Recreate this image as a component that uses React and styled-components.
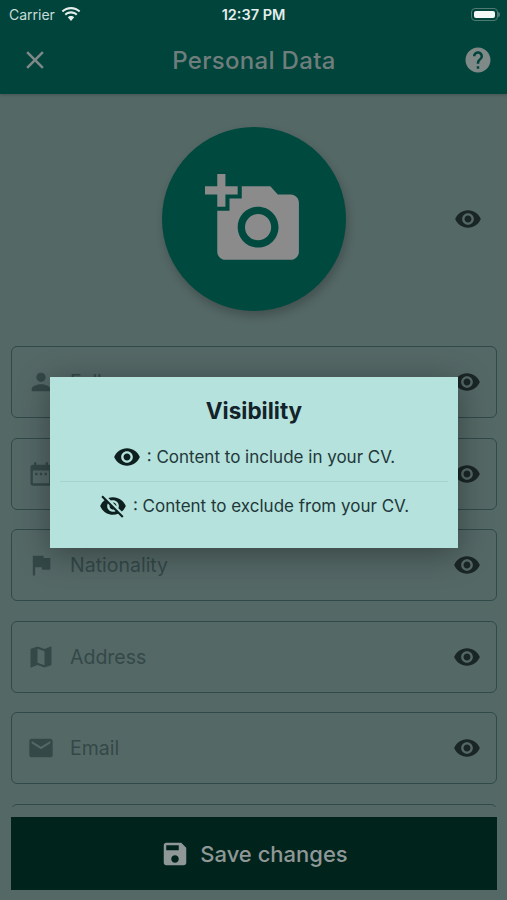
import React from 'react';
import styled, { createGlobalStyle } from 'styled-components';

const GlobalStyle = createGlobalStyle`
    html, body {
        margin: 0;
        padding: 0;
        background: #546866;
    }
    * {
        box-sizing: border-box;
    }
`;

const paths = {
    close: 'M19 6.41L17.59 5 12 10.59 6.41 5 5 6.41 10.59 12 5 17.59 6.41 19 12 13.41 17.59 19 19 17.59 13.41 12z',
    help: 'M12 2C6.48 2 2 6.48 2 12s4.48 10 10 10 10-4.48 10-10S17.52 2 12 2zm1 17h-2v-2h2v2zm2.07-7.75l-.9.92C13.45 12.9 13 13.5 13 15h-2v-.5c0-1.1.45-2.1 1.17-2.83l1.24-1.26c.37-.36.59-.86.59-1.41 0-1.1-.9-2-2-2s-2 .9-2 2H8c0-2.21 1.79-4 4-4s4 1.79 4 4c0 .88-.36 1.68-.93 2.25z',
    eye: 'M12 4.5C7 4.5 2.73 7.61 1 12c1.73 4.39 6 7.5 11 7.5s9.27-3.11 11-7.5c-1.73-4.39-6-7.5-11-7.5zM12 17c-2.76 0-5-2.24-5-5s2.24-5 5-5 5 2.24 5 5-2.24 5-5 5zm0-8c-1.66 0-3 1.34-3 3s1.34 3 3 3 3-1.34 3-3-1.34-3-3-3z',
    eyeOff: 'M12 7c2.76 0 5 2.24 5 5 0 .65-.13 1.26-.36 1.83l2.92 2.92c1.51-1.26 2.7-2.89 3.43-4.75-1.73-4.39-6-7.5-11-7.5-1.4 0-2.74.25-3.98.7l2.16 2.16C10.74 7.13 11.35 7 12 7zM2 4.27l2.28 2.28.46.46C3.08 8.3 1.78 10.02 1 12c1.73 4.39 6 7.5 11 7.5 1.55 0 3.03-.3 4.38-.84l.42.42L19.73 22 21 20.73 3.27 3 2 4.27zM7.53 9.8l1.55 1.55c-.05.21-.08.43-.08.65 0 1.66 1.34 3 3 3 .22 0 .44-.03.65-.08l1.55 1.55c-.67.33-1.41.53-2.2.53-2.76 0-5-2.24-5-5 0-.79.2-1.53.53-2.2zm4.31-.78l3.15 3.15.02-.16c0-1.66-1.34-3-3-3l-.17.01z',
    person: 'M12 12c2.21 0 4-1.79 4-4s-1.79-4-4-4-4 1.79-4 4 1.79 4 4 4zm0 2c-2.67 0-8 1.34-8 4v2h16v-2c0-2.66-5.33-4-8-4z',
    calendar: 'M9 11H7v2h2v-2zm4 0h-2v2h2v-2zm4 0h-2v2h2v-2zm2-7h-1V2h-2v2H8V2H6v2H5c-1.11 0-1.99.9-1.99 2L3 20c0 1.1.89 2 2 2h14c1.1 0 2-.9 2-2V6c0-1.1-.9-2-2-2zm0 16H5V9h14v11z',
    flag: 'M14.4 6L14 4H5v17h2v-7h5.6l.4 2h7V6z',
    map: 'M20.5 3l-.16.03L15 5.1 9 3 3.36 4.9c-.21.07-.36.25-.36.48V20.5c0 .28.22.5.5.5l.16-.03L9 18.9l6 2.1 5.64-1.9c.21-.07.36-.25.36-.48V3.5c0-.28-.22-.5-.5-.5zM15 19l-6-2.11V5l6 2.11V19z',
    email: 'M20 4H4c-1.1 0-1.99.9-1.99 2L2 18c0 1.1.9 2 2 2h16c1.1 0 2-.9 2-2V6c0-1.1-.9-2-2-2zm0 4l-8 5-8-5V6l8 5 8-5v2z',
    save: 'M17 3H5c-1.11 0-2 .9-2 2v14c0 1.1.89 2 2 2h14c1.1 0 2-.9 2-2V7l-4-4zm-5 16c-1.66 0-3-1.34-3-3s1.34-3 3-3 3 1.34 3 3-1.34 3-3 3zm3-10H5V5h10v4z',
    addPhoto: 'M3 4V1h2v3h3v2H5v3H3V6H0V4h3zm3 6V7h3V4h7l1.83 2H21c1.1 0 2 .9 2 2v12c0 1.1-.9 2-2 2H5c-1.1 0-2-.9-2-2V10h3zm7 9c2.76 0 5-2.24 5-5s-2.24-5-5-5-5 2.24-5 5 2.24 5 5 5zm-3.2-5c0 1.77 1.43 3.2 3.2 3.2s3.2-1.43 3.2-3.2-1.43-3.2-3.2-3.2-3.2 1.43-3.2 3.2z'
};

const Svg = styled.svg`
    display: block;
    flex: none;
    fill: currentColor;
`;

const Icon = ({ name, size = 28 }) => (
    <Svg viewBox="0 0 24 24" width={size} height={size}>
        <path d={paths[name]} />
    </Svg>
);

const Page = styled.div`
    position: relative;
    display: flex;
    flex-direction: column;
    width: 507px;
    height: 900px;
    overflow: hidden;
    background: #546866;
    font-family: Inter, Roboto, "Liberation Sans", sans-serif;
`;

const Header = styled.header`
    flex: none;
    height: 94px;
    background: #00443b;
    box-shadow: 0 1px 3px rgba(0, 0, 0, 0.2);
`;

const StatusBar = styled.div`
    display: grid;
    grid-template-columns: 1fr auto 1fr;
    align-items: center;
    height: 28px;
    padding: 0 9px;
    color: #e4eeec;
    font-size: 14px;
`;

const Carrier = styled.div`
    display: flex;
    align-items: center;
    gap: 6px;
    color: #c9dcd8;
`;

const Clock = styled.div`
    font-weight: 600;
    font-size: 14.5px;
`;

const Battery = styled.div`
    justify-self: end;
    position: relative;
    width: 27px;
    height: 13px;
    padding: 2px;
    border: 1px solid #4f7a72;
    border-radius: 4px;
    &::before {
        content: '';
        display: block;
        height: 100%;
        border-radius: 2px;
        background: #f4f8f7;
    }
    &::after {
        content: '';
        position: absolute;
        right: -3px;
        top: 3px;
        width: 2px;
        height: 5px;
        border-radius: 0 2px 2px 0;
        background: #4f7a72;
    }
`;

const TitleBar = styled.div`
    display: flex;
    align-items: center;
    justify-content: space-between;
    height: 64px;
    padding: 0 14px 0 20px;
    color: #7f8987;
`;

const Title = styled.h1`
    margin: 0 5px 0 0;
    font-size: 24px;
    font-weight: 500;
    letter-spacing: 0.3px;
    color: #6f7e7c;
`;

const Content = styled.main`
    flex: 1;
    min-height: 0;
    overflow: hidden;
    padding: 0 10px 0 11px;
`;

const AvatarRow = styled.div`
    display: grid;
    grid-template-columns: 1fr auto 1fr;
    align-items: center;
    padding: 33px 0 35px;
`;

const Avatar = styled.div`
    grid-column: 2;
    display: flex;
    align-items: center;
    justify-content: center;
    width: 184px;
    height: 184px;
    border-radius: 50%;
    background: #00493f;
    color: #8b8b8b;
    box-shadow: 2px 5px 10px rgba(0, 0, 0, 0.22);
`;

const EyeSlot = styled.div`
    justify-self: end;
    margin-right: ${(props) => props.$inset || 0}px;
    color: #1a2526;
`;

const Fields = styled.div`
    display: flex;
    flex-direction: column;
    gap: 19.5px;
`;

const Field = styled.div`
    flex: none;
    display: flex;
    align-items: center;
    height: 72px;
    padding: 0 15px;
    border: 1px solid #304a49;
    border-radius: 6px;
    color: #344848;
`;

const FieldLabel = styled.span`
    flex: 1;
    margin-left: 15px;
    font-size: 19.5px;
    color: #344848;
`;

const Footer = styled.div`
    flex: none;
    padding: 10px 10px 10px 11px;
`;

const SaveButton = styled.button`
    display: flex;
    align-items: center;
    justify-content: center;
    gap: 10px;
    width: 100%;
    height: 73px;
    border: none;
    background: #00231c;
    color: #8f9896;
    font-family: inherit;
    font-size: 22px;
    font-weight: 500;
`;

const Dialog = styled.div`
    position: absolute;
    left: 50px;
    top: 377px;
    width: 408px;
    height: 171px;
    padding: 21px 10px 0;
    background: #b5e2dc;
    box-shadow: 0 6px 30px rgba(0, 0, 0, 0.35);
    color: #22373a;
`;

const DialogTitle = styled.h2`
    margin: 0 0 9px;
    line-height: 26px;
    text-align: center;
    font-size: 22.5px;
    font-weight: 700;
    color: #12232a;
`;

const DialogRow = styled.div`
    display: flex;
    align-items: center;
    justify-content: center;
    gap: 6px;
    height: 48px;
    font-size: 17px;
    & + & {
        border-top: 1px solid #a6d3cd;
        height: 49px;
    }
    svg {
        color: #0e1f20;
    }
`;

const fields = [
    { icon: 'person', label: 'Full name' },
    { icon: 'calendar', label: 'Date of birth' },
    { icon: 'flag', label: 'Nationality' },
    { icon: 'map', label: 'Address' },
    { icon: 'email', label: 'Email' }
];

const Wifi = () => (
    <svg width="20" height="15" viewBox="0 0 20 15" fill="#e4eeec">
        <path d="M10 2.2c3.1 0 5.9 1.2 8 3.1l1.3-1.5C16.8 1.5 13.6 0 10 0S3.2 1.5.7 3.8L2 5.3c2.1-1.9 4.9-3.1 8-3.1z" />
        <path d="M10 6.5c1.9 0 3.7.7 5 1.9l1.4-1.5C14.7 5.3 12.5 4.3 10 4.3S5.3 5.3 3.6 6.9L5 8.4c1.3-1.2 3.1-1.9 5-1.9z" />
        <path d="M10 8.9c-1.3 0-2.4.5-3.2 1.3L10 14l3.2-3.8c-.8-.8-1.9-1.3-3.2-1.3z" />
    </svg>
);

const App = () => (
    <Page>
        <GlobalStyle />
        <Header>
            <StatusBar>
                <Carrier>Carrier <Wifi /></Carrier>
                <Clock>12:37 PM</Clock>
                <Battery />
            </StatusBar>
            <TitleBar>
                <Icon name="close" size={30} />
                <Title>Personal Data</Title>
                <Icon name="help" size={30} />
            </TitleBar>
        </Header>
        <Content>
            <AvatarRow>
                <Avatar>
                    <Icon name="addPhoto" size={98} />
                </Avatar>
                <EyeSlot $inset={15}>
                    <Icon name="eye" />
                </EyeSlot>
            </AvatarRow>
            <Fields>
                {fields.map((field) => (
                    <Field key={field.label}>
                        <Icon name={field.icon} />
                        <FieldLabel>{field.label}</FieldLabel>
                        <EyeSlot>
                            <Icon name="eye" />
                        </EyeSlot>
                    </Field>
                ))}
                {/* next field is scrolled under the save button, only its top edge shows */}
                <Field />
            </Fields>
        </Content>
        <Footer>
            <SaveButton>
                <Icon name="save" size={30} />
                Save changes
            </SaveButton>
        </Footer>
        <Dialog>
            <DialogTitle>Visibility</DialogTitle>
            <DialogRow>
                <Icon name="eye" />
                <span>: Content to include in your CV.</span>
            </DialogRow>
            <DialogRow>
                <Icon name="eyeOff" />
                <span>: Content to exclude from your CV.</span>
            </DialogRow>
        </Dialog>
    </Page>
);

export default App;
